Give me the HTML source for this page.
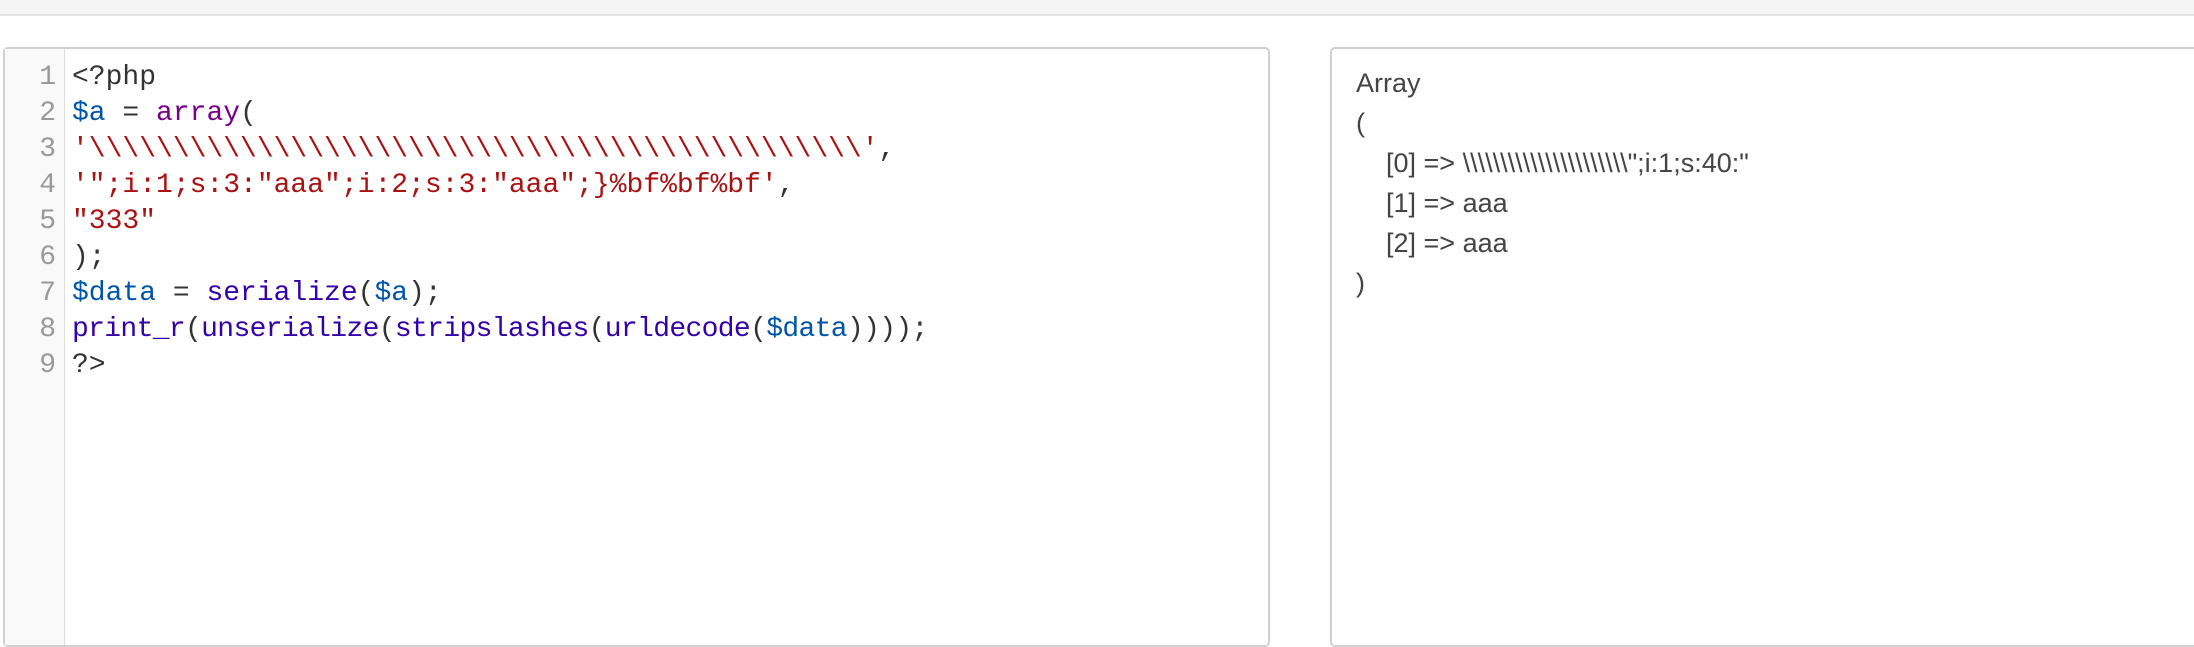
<!DOCTYPE html>
<html><head><style>
body{margin:0;width:2194px;height:612px;background:#fff;overflow:hidden;position:relative;font-family:"Liberation Sans",sans-serif}
.top{position:absolute;left:0;top:0;width:2194px;height:14px;background:#f5f5f5;border-bottom:2px solid #e3e3e3}
.p{position:absolute;top:47px;height:600px;border:2px solid #d0d0d0;border-radius:5px;background:#fff;box-sizing:border-box}
.l{left:3px;width:1267px}
.r{left:1330px;width:900px}
.g{position:absolute;left:0;top:0;width:59px;height:100%;background:#f9f9f9;border-right:1px solid #ddd}
.code{position:absolute;left:0;top:11px;font-family:"Liberation Mono",monospace;font-size:28px;line-height:36px;white-space:pre;color:#333}
.ln{display:inline-block;width:51px;text-align:right;color:#999;margin-right:16px;letter-spacing:0}
.s{color:#a11}.v{color:#05a}.k{color:#708}.f{color:#30a}
.out{position:absolute;left:24px;top:14px;font-size:27px;line-height:40px;color:#444;white-space:pre}
</style></head><body>
<div class="top"></div>
<div class="p l"><div class="g"></div><div class="code"><span class="ln">1</span>&lt;?php
<span class="ln">2</span><span class="v">$a</span> = <span class="k">array</span>(
<span class="ln">3</span><span class="s">'\\\\\\\\\\\\\\\\\\\\\\\\\\\\\\\\\\\\\\\\\\\\\\'</span>,
<span class="ln">4</span><span class="s">'";i:1;s:3:"aaa";i:2;s:3:"aaa";}%bf%bf%bf'</span>,
<span class="ln">5</span><span class="s">"333"</span>
<span class="ln">6</span>);
<span class="ln">7</span><span class="v">$data</span> = <span class="f">serialize</span>(<span class="v">$a</span>);
<span class="ln">8</span><span style="letter-spacing:-0.66px"><span class="f">print_r</span>(<span class="f">unserialize</span>(<span class="f">stripslashes</span>(<span class="f">urldecode</span>(<span class="v">$data</span>))));</span>
<span class="ln">9</span>?&gt;</div></div>
<div class="p r"><div class="out">Array
(
    [0] =&gt; \\\\\\\\\\\\\\\\\\\\\\";i:1;s:40:"
    [1] =&gt; aaa
    [2] =&gt; aaa
)</div></div>
</body></html>
